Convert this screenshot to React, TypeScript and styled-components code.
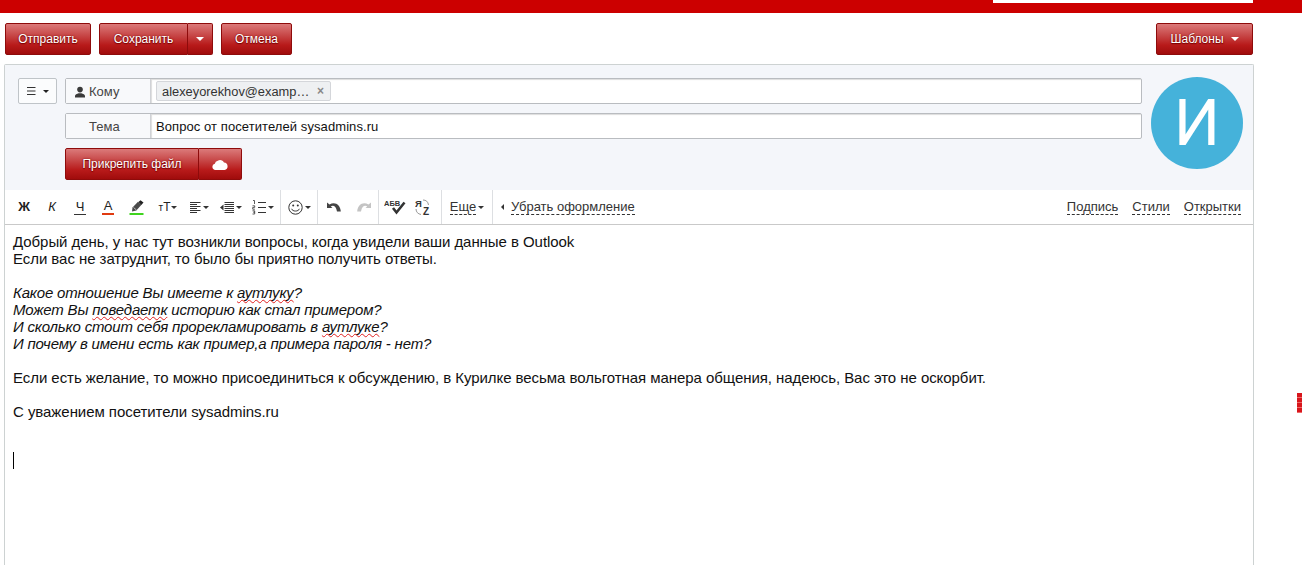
import React from "react";
import styled, { createGlobalStyle, css } from "styled-components";

const Global = createGlobalStyle`
  html, body { margin: 0; padding: 0; background: #fff; height: 565px; overflow: hidden; }
  body { font-family: "Liberation Sans", Arial, sans-serif; color: #222; }
`;

const Page = styled.div`
  position: relative;
  height: 565px;
  overflow: hidden;
`;

const TopBar = styled.div`
  height: 13px;
  background: #cc0000;
  padding-left: 993px;
  box-sizing: border-box;
`;

const SearchStub = styled.div`
  width: 260px;
  height: 3px;
  background: #fff;
`;

const ActionBar = styled.div`
  display: flex;
  align-items: flex-start;
  padding: 10px 49px 0 5px;
  height: 51px;
  box-sizing: border-box;
  gap: 8px;
`;

const redButton = css`
  box-sizing: border-box;
  height: 32px;
  display: inline-flex;
  align-items: center;
  justify-content: center;
  gap: 7px;
  padding: 0;
  border: 1px solid #8e0b0b;
  border-radius: 2px;
  background: linear-gradient(#db7a7a 0%, #c64444 40%, #b81a1a 70%, #a00c0c 100%);
  color: #fff;
  font: 12px "Liberation Sans", Arial, sans-serif;
  text-shadow: 0 0 2px #7a0000, 0 1px 1px #7a0000;
  cursor: pointer;
`;

const RedButton = styled.button<{ $w: number }>`
  ${redButton}
  width: ${(p) => p.$w}px;
`;

const Spacer = styled.div`
  flex: 1;
`;

const SplitGroup = styled.div`
  display: flex;
`;

const SplitMain = styled.button<{ $w: number }>`
  ${redButton}
  width: ${(p) => p.$w}px;
  border-radius: 2px 0 0 2px;
`;

const SplitSide = styled.button<{ $w: number }>`
  ${redButton}
  width: ${(p) => p.$w}px;
  border-left: 0;
  border-radius: 0 2px 2px 0;
`;

const Caret = styled.span<{ $c?: string; $s?: number }>`
  display: inline-block;
  width: 0;
  height: 0;
  border-left: ${(p) => p.$s ?? 4}px solid transparent;
  border-right: ${(p) => p.$s ?? 4}px solid transparent;
  border-top: ${(p) => p.$s ?? 4}px solid ${(p) => p.$c ?? "#fff"};
`;

const Card = styled.div`
  margin-left: 4px;
  width: 1250px;
  box-sizing: border-box;
  border: 1px solid #cdd2d2;
  border-bottom: 0;
  border-radius: 2px 2px 0 0;
`;

const Header = styled.div`
  height: 125px;
  box-sizing: border-box;
  background: #f4f6fa;
  padding: 13px 10px 0 13px;
  display: flex;
`;

const MenuColumn = styled.div`
  width: 47px;
  flex: none;
`;

const MenuButton = styled.button`
  box-sizing: border-box;
  width: 39px;
  height: 26px;
  border: 1px solid #bfc4c8;
  border-radius: 2px;
  background: #fbfcfd;
  display: flex;
  align-items: center;
  justify-content: center;
  gap: 7px;
  padding: 0;
`;

const Fields = styled.div`
  width: 1077px;
  flex: none;
  display: flex;
  flex-direction: column;
  gap: 9px;
`;

const FieldRow = styled.div`
  display: flex;
  height: 26px;
  box-sizing: border-box;
  border: 1px solid #b9bcc0;
  border-radius: 2px;
  background: #fff;
`;

const FieldLabel = styled.div<{ $indent: number }>`
  box-sizing: border-box;
  width: 85px;
  flex: none;
  display: flex;
  align-items: center;
  gap: 3px;
  padding: 1px 0 0 ${(p) => p.$indent}px;
  background: #f8f9fb;
  border-right: 1px solid #d0d2d6;
  font-size: 13px;
  color: #444;
`;

const FieldValue = styled.div`
  flex: 1;
  display: flex;
  align-items: center;
  padding: 1px 0 0 5px;
  font-size: 13px;
  letter-spacing: 0.08px;
  color: #111;
  box-shadow: inset 1px 1px 1px #ddd;
`;

const ChipCell = styled(FieldValue)`
  padding-left: 4px;
  letter-spacing: 0;
`;

const RecipientChip = styled.div`
  box-sizing: border-box;
  height: 20px;
  width: 175px;
  margin: -1px 0 0 1px;
  padding: 0 6px 0 5px;
  display: flex;
  align-items: center;
  justify-content: space-between;
  background: #eef0f2;
  border: 1px solid #d4d6da;
  border-radius: 2px;
  font-size: 12.85px;
  color: #333;
`;

const ChipClose = styled.span`
  color: #888;
  font-size: 12px;
  font-weight: bold;
`;

const AttachGroup = styled.div`
  display: flex;
`;

const Avatar = styled.div`
  margin: -1px 0 0 9px;
  width: 92px;
  height: 92px;
  flex: none;
  border-radius: 50%;
  background: #45b2da;
  color: #fff;
  font: 400 65px/92px Roboto, "Liberation Sans", sans-serif;
  text-align: center;
`;

const Toolbar = styled.div`
  box-sizing: border-box;
  height: 35px;
  padding: 0 12px 0 5px;
  background: #fff;
  display: flex;
  align-items: stretch;
  border-bottom: 1px solid #c9c9c9;
`;

const Tool = styled.div<{ $w: number; $pr?: number }>`
  box-sizing: border-box;
  width: ${(p) => p.$w}px;
  padding-right: ${(p) => p.$pr ?? 0}px;
  flex: none;
  display: flex;
  align-items: center;
  justify-content: center;
  gap: 2px;
  color: #222;
`;

const Glyph = styled.span<{ $bold?: boolean; $italic?: boolean; $line?: string; $lineW?: number }>`
  font-size: 13px;
  line-height: 14px;
  font-weight: ${(p) => (p.$bold ? "bold" : "normal")};
  font-style: ${(p) => (p.$italic ? "italic" : "normal")};
  color: #222;
  ${(p) => p.$line && `border-bottom: ${p.$lineW ?? 2}px solid ${p.$line}; padding: 0 2px;`}
`;

const TtGlyph = styled.span`
  font-size: 12px;
  color: #222;
  margin: 0 -1px 0 3px;
  small { font-size: 10px; }
`;

const Separator = styled.div`
  width: 1px;
  flex: none;
  background: #dddfe2;
`;

const DashedLink = styled.span`
  font-size: 13px;
  line-height: 15px;
  color: #333;
  border-bottom: 1px dashed #333;
`;

const ClearTool = styled.div`
  margin-left: 8px;
  display: flex;
  align-items: center;
  gap: 7px;
`;

const ToolbarRight = styled.div`
  margin-left: auto;
  display: flex;
  align-items: center;
  gap: 14px;
`;

const Body = styled.div`
  height: 340px;
  box-sizing: border-box;
  padding: 8px 8px 0;
  font-size: 15px;
  letter-spacing: -0.055px;
  line-height: 17px;
  color: #111;
  background: #fff;
`;

const Line = styled.div`
  min-height: 17px;
`;

const ItalicLine = styled(Line)`
  font-style: italic;
  letter-spacing: -0.18px;
`;

const Misspelled = styled.span`
  text-decoration: underline wavy #e02020 1px;
  text-decoration-skip-ink: none;
  text-underline-offset: 1px;
`;

const TextCaret = styled.div`
  width: 1px;
  height: 17px;
  margin-top: -2px;
  background: #000;
`;

const EdgeMark = styled.div`
  position: absolute;
  right: 0;
  top: 393px;
  width: 5px;
  height: 20px;
  background: repeating-linear-gradient(#d8161c 0 4px, #ee6a6a 4px 5px);
`;

const Stroke = { fill: "none", stroke: "#333", strokeWidth: 1 };

const UNDO_PATH = "M0 0.500V6H5.500L3.800 4.400C6.200 3 9 4 10 9.500H13.800C13.500 3 8 -1 2.500 2.500z";

const UserIcon = () => (
  <svg width="12" height="12" viewBox="0 0 12 12">
    <circle cx="6" cy="3.600" r="2.800" fill="#3a3a3a" />
    <path d="M1 11.500v-1.600c0-1.500 2-2 3.600-2.600h2.800c1.600.6 3.600 1.100 3.600 2.600v1.600z" fill="#3a3a3a" />
  </svg>
);

const MenuIcon = () => (
  <svg width="9" height="8" viewBox="0 0 9 8">
    <path d="M0 .5h8.500M0 4h8.500M0 7.500h8.500" stroke="#333" strokeWidth="1" />
  </svg>
);

const CloudIcon = () => (
  <svg width="16" height="11" viewBox="0 0 16 11">
    <path d="M3.400 11a3.200 3.200 0 0 1-.6-6.300 3.600 3.600 0 0 1 3-2.900A4.200 4.200 0 0 1 12 3.500a3.800 3.800 0 0 1 .6 7.500z" fill="#fff" />
  </svg>
);

const MarkerIcon = () => (
  <svg width="15" height="15" viewBox="0 0 15 15">
    <path d="M3 11.500l.5-4L9 1.800l3.500 3-5.200 5.700z" fill="#4a4a4a" />
    <path d="M9.500 2L11.500 0.200 14.500 2.500 12.300 5z" fill="#222" />
    <path d="M4.500 7.500l3 2.500" stroke="#b5b5b5" strokeWidth="1" />
    <rect x="0.500" y="13" width="14" height="2" fill="#3fd41e" />
  </svg>
);

const AlignIcon = () => (
  <svg width="11" height="11" viewBox="0 0 11 11">
    <path d="M0 .5h10.500M0 2.500h7M0 4.500h10.500M0 6.500h7M0 8.500h10.500M0 10.500h7" {...Stroke} />
  </svg>
);

const IndentIcon = () => (
  <svg width="14" height="11" viewBox="0 0 14 11">
    <path d="M3.500 2.500v6L0 5.500z" fill="#333" />
    <path d="M4.500 .5h9.500M4.500 2.500h9.500M4.500 4.500h9.500M4.500 6.500h9.500M4.500 8.500h9.500M4.500 10.500h9.500" {...Stroke} />
  </svg>
);

const ListIcon = () => (
  <svg width="14" height="15" viewBox="0 0 14 15">
    <path d="M1 .5h1.500v3.500M0.500 5.800h2.200v1.600h-2v1.800h2.200M0.500 10.800h2.200v1.400h-1.200h1.200v1.800h-2.200" fill="none" stroke="#333" strokeWidth=".8" />
    <path d="M6 2.500h8M6 7.500h8M6 12.500h8" {...Stroke} />
  </svg>
);

const SmileIcon = () => (
  <svg width="15" height="15" viewBox="0 0 15 15">
    <circle cx="7.500" cy="7.500" r="6.700" fill="none" stroke="#333" />
    <circle cx="5.200" cy="5.600" r="1" fill="#333" />
    <circle cx="9.800" cy="5.600" r="1" fill="#333" />
    <path d="M3.600 8.800c1 3 6.800 3 7.800 0" fill="none" stroke="#333" />
  </svg>
);

const UndoIcon = () => (
  <svg width="14" height="10" viewBox="0 0 14 10">
    <path d={UNDO_PATH} fill="#444" />
  </svg>
);

const RedoIcon = () => (
  <svg width="14" height="10" viewBox="0 0 14 10">
    <g transform="matrix(-1 0 0 1 14 0)">
      <path d={UNDO_PATH} fill="#c4c4c4" />
    </g>
  </svg>
);

const SpellIcon = () => (
  <svg width="22" height="16" viewBox="0 0 22 16">
    <text x="0" y="7" fontSize="7.500" fontFamily="Liberation Sans" fill="#333" fontWeight="bold">АБВ</text>
    <path d="M9 9l3.500 4.500L20.500 3.500" fill="none" stroke="#333" strokeWidth="2.600" />
  </svg>
);

const TranslitIcon = () => (
  <svg width="16" height="22" viewBox="0 0 16 22">
    <text x="0" y="11" fontSize="9.500" fontFamily="Liberation Sans" fontWeight="bold" fill="#333">Я</text>
    <text x="8" y="19" fontSize="10" fontFamily="Liberation Sans" fontWeight="bold" fill="#333">Z</text>
    <path d="M8 4c3 0 5 1.500 5.500 5M1 13c0 3 2 5 5 5.500" fill="none" stroke="#999" strokeWidth="1" />
  </svg>
);

export default function App() {
  return (
    <Page>
      <Global />
      <TopBar>
        <SearchStub />
      </TopBar>
      <ActionBar>
        <RedButton $w={86}>Отправить</RedButton>
        <SplitGroup>
          <SplitMain $w={89}>Сохранить</SplitMain>
          <SplitSide $w={25}>
            <Caret />
          </SplitSide>
        </SplitGroup>
        <RedButton $w={71}>Отмена</RedButton>
        <Spacer />
        <RedButton $w={97}>
          Шаблоны
          <Caret />
        </RedButton>
      </ActionBar>
      <Card>
        <Header>
          <MenuColumn>
            <MenuButton>
              <MenuIcon />
              <Caret $c="#222" $s={3} />
            </MenuButton>
          </MenuColumn>
          <Fields>
            <FieldRow>
              <FieldLabel $indent={8}>
                <UserIcon />
                Кому
              </FieldLabel>
              <ChipCell>
                <RecipientChip>
                  alexeyorekhov@examp…
                  <ChipClose>×</ChipClose>
                </RecipientChip>
              </ChipCell>
            </FieldRow>
            <FieldRow>
              <FieldLabel $indent={23}>Тема</FieldLabel>
              <FieldValue>Вопрос от посетителей sysadmins.ru</FieldValue>
            </FieldRow>
            <AttachGroup>
              <SplitMain $w={134}>Прикрепить файл</SplitMain>
              <SplitSide $w={43}>
                <CloudIcon />
              </SplitSide>
            </AttachGroup>
          </Fields>
          <Avatar>И</Avatar>
        </Header>
        <Toolbar>
          <Tool $w={28}><Glyph $bold>Ж</Glyph></Tool>
          <Tool $w={28}><Glyph $italic>К</Glyph></Tool>
          <Tool $w={28}><Glyph $line="#333" $lineW={1}>Ч</Glyph></Tool>
          <Tool $w={28}><Glyph $line="#e03a10">А</Glyph></Tool>
          <Tool $w={28}><MarkerIcon /></Tool>
          <Tool $w={33}>
            <TtGlyph><small>т</small>Т</TtGlyph>
            <Caret $c="#333" $s={3} />
          </Tool>
          <Tool $w={32}><AlignIcon /><Caret $c="#333" $s={3} /></Tool>
          <Tool $w={31}><IndentIcon /><Caret $c="#333" $s={3} /></Tool>
          <Tool $w={34}><ListIcon /><Caret $c="#333" $s={3} /></Tool>
          <Separator />
          <Tool $w={36}><SmileIcon /><Caret $c="#333" $s={3} /></Tool>
          <Separator />
          <Tool $w={32}><UndoIcon /></Tool>
          <Tool $w={28}><RedoIcon /></Tool>
          <Separator />
          <Tool $w={32}><SpellIcon /></Tool>
          <Tool $w={30} $pr={6}><TranslitIcon /></Tool>
          <Separator />
          <Tool $w={50}>
            <DashedLink>Еще</DashedLink>
            <Caret $c="#333" $s={3} />
          </Tool>
          <Separator />
          <ClearTool>
            <svg width="3" height="6" viewBox="0 0 3 6"><path d="M3 0v6L0 3z" fill="#333" /></svg>
            <DashedLink>Убрать оформление</DashedLink>
          </ClearTool>
          <ToolbarRight>
            <DashedLink>Подпись</DashedLink>
            <DashedLink>Стили</DashedLink>
            <DashedLink>Открытки</DashedLink>
          </ToolbarRight>
        </Toolbar>
        <Body>
          <Line>Добрый день, у нас тут возникли вопросы, когда увидели ваши данные в Outlook</Line>
          <Line>Если вас не затруднит, то было бы приятно получить ответы.</Line>
          <Line />
          <ItalicLine>Какое отношение Вы имеете к <Misspelled>аутлуку</Misspelled>?</ItalicLine>
          <ItalicLine>Может Вы <Misspelled>поведаетк</Misspelled> историю как стал примером?</ItalicLine>
          <ItalicLine>И сколько стоит себя прорекламировать в <Misspelled>аутлуке</Misspelled>?</ItalicLine>
          <ItalicLine>И почему в имени есть как пример,а примера пароля - нет?</ItalicLine>
          <Line />
          <Line>Если есть желание, то можно присоединиться к обсуждению, в Курилке весьма вольготная манера общения, надеюсь, Вас это не оскорбит.</Line>
          <Line />
          <Line>С уважением посетители sysadmins.ru</Line>
          <Line />
          <Line />
          <TextCaret />
        </Body>
      </Card>
      <EdgeMark />
    </Page>
  );
}
